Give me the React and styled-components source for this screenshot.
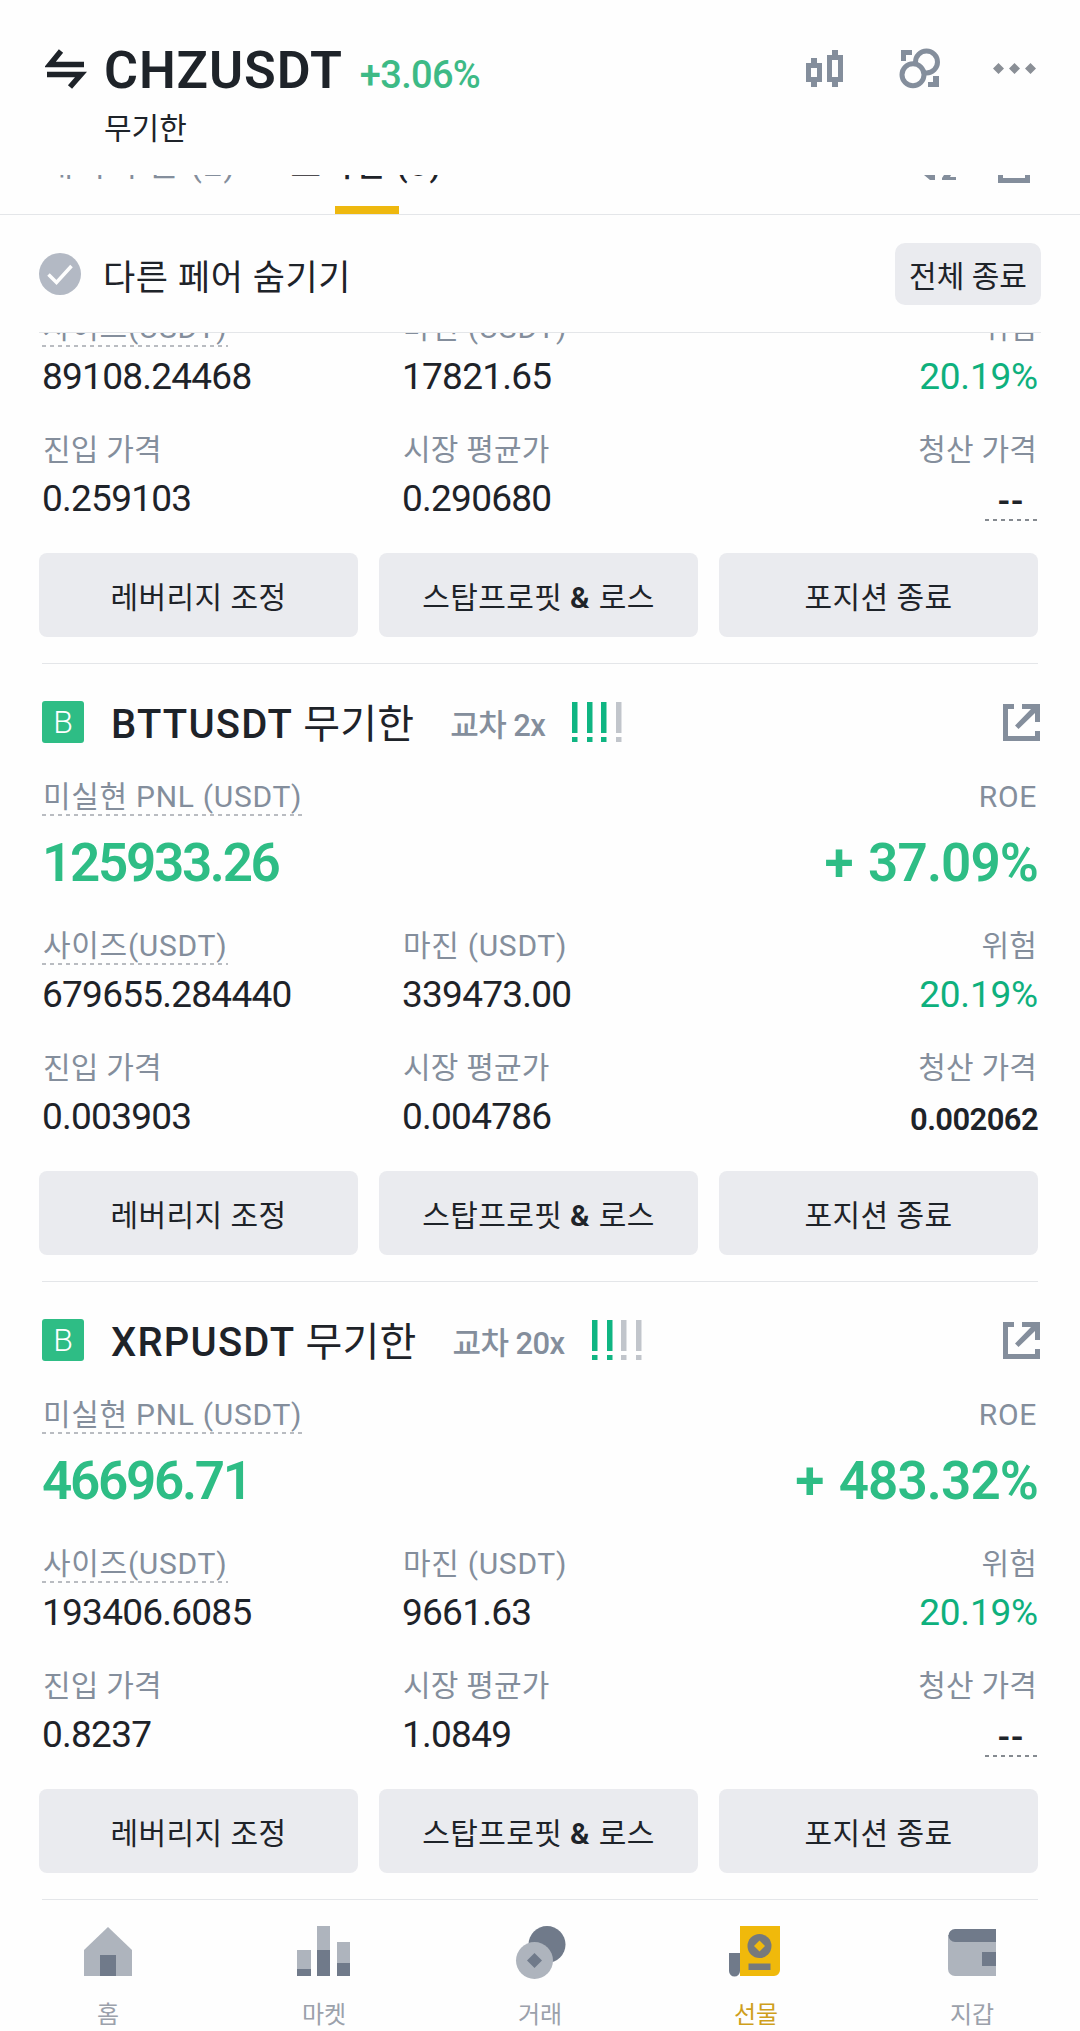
import styled, { createGlobalStyle, css } from 'styled-components';

const GlobalStyle = createGlobalStyle`
  * {
    box-sizing: border-box;
  }

  body {
    margin: 0;
    background: #fefefe;
  }
`;

const Screen = styled.div`
  display: flex;
  flex-direction: column;
  width: 1080px;
  height: 2031px;
  overflow: hidden;
  background: #fefefe;
  color: #1e2329;
  font-family: Roboto, 'Noto Sans CJK KR', sans-serif;
  white-space: nowrap;
`;

const Header = styled.header`
  display: flex;
  justify-content: space-between;
  height: 175px;
  padding: 38px 43px 0 45px;
`;

const HeaderLeft = styled.div`
  display: grid;
  grid-template-columns: 59px auto;
  align-content: start;
`;

const SwapIcon = styled.svg`
  width: 42px;
  height: 42px;
  margin-top: 10px;
`;

const TitleLine = styled.div`
  display: flex;
  align-items: baseline;
  height: 66px;
  padding-top: 1px;
  line-height: 64px;
`;

const Symbol = styled.h1`
  margin: 0;
  font-size: 52px;
  font-weight: 600;
  letter-spacing: 0.9px;
`;

const Change = styled.span`
  margin-left: 17px;
  font-size: 38px;
  font-weight: 500;
  letter-spacing: -0.7px;
  color: #3dba86;
`;

const ContractType = styled.div`
  grid-column: 2;
  height: 50px;
  line-height: 50px;
  font-size: 30px;
`;

const HeaderIcons = styled.div`
  display: flex;
  gap: 54px;
  margin-top: 8px;
  height: 46px;
`;

const HeaderIcon = styled.svg`
  width: 42px;
  height: 46px;
  overflow: visible;
`;

const Tabs = styled.div`
  display: flex;
  justify-content: space-between;
  height: 40px;
  padding: 0 48px 0 43px;
  border-bottom: 1px solid #e4e6e9;
  overflow: hidden;
`;

const TabList = styled.div`
  display: flex;
  gap: 54px;
`;

const Tab = styled.div`
  display: flex;
  flex-direction: column;
  justify-content: space-between;
  align-items: center;
  font-size: 33px;
  letter-spacing: 1.6px;
  color: ${(props) => (props.$active ? '#1e2329' : '#848e9c')};
  font-weight: ${(props) => (props.$active ? 500 : 400)};

  &::after {
    content: '';
    width: 64px;
    height: 8px;
    background: ${(props) => (props.$active ? '#eeb80f' : 'transparent')};
  }
`;

const TabLabel = styled.span`
  height: 12px;
  margin-top: -32px;
  line-height: 44px;
`;

const TabIcons = styled.svg`
  width: 108px;
  height: 10px;
`;

const FilterBar = styled.div`
  display: flex;
  align-items: center;
  height: 118px;
  margin: 0 39px;
  padding-top: 1px;
  border-bottom: 1px solid #e4e6e9;
`;

const Check = styled.svg`
  width: 42px;
  height: 42px;
`;

const FilterLabel = styled.span`
  flex: 1;
  margin-left: 22px;
  padding-top: 9px;
  font-size: 35px;
  line-height: 50px;
  letter-spacing: 0.6px;
`;

const Button = styled.button`
  border: 0;
  background: #eaebef;
  color: #1e2329;
  font-family: inherit;
  font-size: 30px;
  line-height: 30px;
`;

const CloseAll = styled(Button)`
  width: 146px;
  height: 62px;
  padding: 6px 0 0;
  border-radius: 10px;
`;

const Positions = styled.main`
  height: 1567px;
  overflow: hidden;
`;

const Card = styled.section`
  display: flex;
  flex-direction: column;
  justify-content: flex-end;
  height: ${(props) => (props.$scrolled ? 331 : 618)}px;
  margin: 0 42px;
  padding-bottom: 26px;
  border-bottom: 1px solid #e4e6e9;
`;

const CardHead = styled.div`
  display: flex;
  align-items: center;
  flex-shrink: 0;
  height: 42px;
  margin-bottom: 33px;
`;

const Side = styled.div`
  width: 42px;
  height: 42px;
  border-radius: 3px;
  background: #2ebd85;
  color: #fff;
  font-size: 32px;
  font-weight: 300;
  line-height: 43px;
  text-align: center;
`;

const Pair = styled.h2`
  margin: 5px 0 0 27px;
  font-size: 40px;
  font-weight: 500;
  line-height: 50px;
  letter-spacing: 1.2px;

  span {
    font-weight: 400;
    letter-spacing: 0.2px;
  }
`;

const Leverage = styled.span`
  margin: 8px 27px 0 36px;
  font-size: 31px;
  font-weight: 500;
  line-height: 40px;
  letter-spacing: -0.6px;
  color: #848e9c;
`;

const Signal = styled.svg`
  width: 50px;
  height: 40px;
`;

const OpenIcon = styled.svg`
  width: 37px;
  height: 37px;
  margin: 1px -2px 0 auto;
`;

const Row = styled.div`
  display: grid;
  grid-template-columns: 360px 1fr auto;
  flex-shrink: 0;
  height: ${(props) => props.$height}px;
`;

const Cell = styled.div`
  display: flex;
  flex-direction: column;
  align-items: flex-start;

  &:last-child {
    grid-column: 3;
    align-items: flex-end;
  }
`;

const dashed = (color) => css`
  background: repeating-linear-gradient(90deg, ${color} 0 4px, transparent 4px 8px) 0 100% / 100% 2px no-repeat;
`;

const Label = styled.div`
  height: 40px;
  padding: 0 1px;
  font-size: 30px;
  line-height: 42px;
  letter-spacing: ${(props) => (props.$wide ? '0.7px' : '0.2px')};
  color: #848e9c;
  ${(props) => props.$hint && dashed('#b9bcc1')}
`;

const Value = styled.div`
  height: 40px;
  margin-top: 10px;
  font-size: 37px;
  line-height: 40px;
  letter-spacing: ${(props) => (props.$green ? '-0.2px' : '-0.75px')};
  color: ${(props) => (props.$green ? '#0eb07d' : '#1e2329')};
`;

const LiquidationPrice = styled(Value)`
  margin-top: 13px;
  font-size: 31px;
  font-weight: 600;
  letter-spacing: -0.6px;
`;

const NoPrice = styled.div`
  width: 52px;
  height: 43px;
  margin: 9px 1px 0 0;
  font-size: 36px;
  font-weight: 500;
  line-height: 48px;
  letter-spacing: 1px;
  text-align: center;
  ${dashed('#858a90')}
`;

const Profit = styled.div`
  height: 60px;
  margin-top: 17px;
  font-size: 53px;
  font-weight: 600;
  line-height: 60px;
  letter-spacing: ${(props) => (props.$rate ? '-0.9px' : '-2.3px')};
  word-spacing: 3px;
  color: #2ebd85;
`;

const Actions = styled.div`
  display: grid;
  grid-template-columns: repeat(3, 1fr);
  flex-shrink: 0;
  gap: 21px;
  margin-left: -3px;
`;

const Action = styled(Button)`
  height: 84px;
  padding: 6px 0 0;
  border-radius: 8px;
  letter-spacing: 0.4px;

  b {
    font-weight: 600;
    letter-spacing: 1.5px;
  }
`;

const Nav = styled.nav`
  display: grid;
  grid-template-columns: repeat(5, 1fr);
  flex: 1;
  padding-top: 26px;
`;

const NavItem = styled.div`
  display: flex;
  flex-direction: column;
  align-items: center;
  font-size: 24px;
  line-height: 30px;
  color: ${(props) => (props.$active ? '#cf9f1c' : '#9ba1ab')};

  svg {
    width: 54px;
    height: 54px;
    margin-bottom: 20px;
  }
`;

const positions = [
  {
    scrolled: true,
    size: '89108.24468',
    margin: '17821.65',
    entry: '0.259103',
    mark: '0.290680',
  },
  {
    pair: 'BTTUSDT',
    leverage: '2x',
    signal: 3,
    pnl: '125933.26',
    roe: '+ 37.09%',
    size: '679655.284440',
    margin: '339473.00',
    entry: '0.003903',
    mark: '0.004786',
    liquidation: '0.002062',
  },
  {
    pair: 'XRPUSDT',
    leverage: '20x',
    signal: 2,
    pnl: '46696.71',
    roe: '+ 483.32%',
    size: '193406.6085',
    margin: '9661.63',
    entry: '0.8237',
    mark: '1.0849',
  },
];

const navItems = [
  {
    label: '홈',
    icon: (
      <>
        <path d="M3 50V24L27 1l24 23v26z" fill="#aeb4bd" />
        <path d="M19 29h16v21H19z" fill="#707a8a" />
      </>
    ),
  },
  {
    label: '마켓',
    icon: (
      <>
        <path d="M0 24h14v26H0zM20 0h13v50H20zM40 16h13v34H40z" fill="#aeb4bd" />
        <path d="M0 43h14v7H0zM20 24h13v26H20zM40 37h13v13H40z" fill="#707a8a" />
      </>
    ),
  },
  {
    label: '거래',
    icon: (
      <>
        <circle cx="34" cy="18.5" r="18.5" fill="#707a8a" />
        <circle cx="21.5" cy="34.5" r="18.5" fill="#aeb4bd" />
        <path d="M21.5 27l7.5 7.5-7.5 7.5-7.5-7.5z" fill="#707a8a" />
      </>
    ),
  },
  {
    label: '선물',
    active: true,
    icon: (
      <>
        <path d="M5 50h40a6 6 0 0 0 6-6V0H11v50z" fill="#f0b90b" />
        <path d="M0 27h11v18a5.5 5.5 0 0 1-11 0z" fill="#707a8a" />
        <circle cx="30.5" cy="20" r="12" fill="#76797c" />
        <path d="M30.5 14.5l5.5 5.5-5.5 5.5-5.5-5.5z" fill="#f0b90b" />
        <path d="M19.5 37.5h22V44h-22z" fill="#76797c" />
      </>
    ),
  },
  {
    label: '지갑',
    icon: (
      <>
        <path d="M3 9h48v41H10a7 7 0 0 1-7-7z" fill="#aeb4bd" />
        <path d="M51 3v13H10a6.5 6.5 0 0 1 0-13z" fill="#707a8a" />
        <path d="M37 26h14v14H37z" fill="#707a8a" />
      </>
    ),
  },
];

const SignalBars = ({ level }) => (
  <Signal viewBox="0 0 50 40">
    {[0, 15, 29, 44].map((x, index) => (
      <path
        key={x}
        d={`M${x} 0h5.5v31h-5.5zM${x} 35h5.5v5h-5.5z`}
        fill={index < level ? '#0fb582' : '#c1c5cb'}
      />
    ))}
  </Signal>
);

const PositionCard = ({ position }) => (
  <Card $scrolled={position.scrolled}>
    {!position.scrolled && (
      <>
        <CardHead>
          <Side>B</Side>
          <Pair>
            {position.pair} <span>무기한</span>
          </Pair>
          <Leverage>교차 {position.leverage}</Leverage>
          <SignalBars level={position.signal} />
          <OpenIcon viewBox="0 0 37 37" fill="#848e9c">
            <path d="M0 0h11v5H5v27h27v-5h5v10H0z" />
            <path d="M19 0h18v18h-5V9L15.5 25 12 21.5 28 5h-9z" />
          </OpenIcon>
        </CardHead>
        <Row $height={149}>
          <Cell>
            <Label $hint $wide>미실현 PNL (USDT)</Label>
            <Profit>{position.pnl}</Profit>
          </Cell>
          <Cell>
            <Label $wide>ROE</Label>
            <Profit $rate>{position.roe}</Profit>
          </Cell>
        </Row>
      </>
    )}
    <Row $height={122}>
      <Cell>
        <Label $hint $wide>사이즈(USDT)</Label>
        <Value>{position.size}</Value>
      </Cell>
      <Cell>
        <Label $wide>마진 (USDT)</Label>
        <Value>{position.margin}</Value>
      </Cell>
      <Cell>
        <Label>위험</Label>
        <Value $green>20.19%</Value>
      </Cell>
    </Row>
    <Row $height={124}>
      <Cell>
        <Label>진입 가격</Label>
        <Value>{position.entry}</Value>
      </Cell>
      <Cell>
        <Label>시장 평균가</Label>
        <Value>{position.mark}</Value>
      </Cell>
      <Cell>
        <Label>청산 가격</Label>
        {position.liquidation ? (
          <LiquidationPrice>{position.liquidation}</LiquidationPrice>
        ) : (
          <NoPrice>--</NoPrice>
        )}
      </Cell>
    </Row>
    <Actions>
      <Action>레버리지 조정</Action>
      <Action>
        스탑프로핏 <b>&amp;</b> 로스
      </Action>
      <Action>포지션 종료</Action>
    </Actions>
  </Card>
);

const App = () => (
  <Screen>
    <GlobalStyle />
    <Header>
      <HeaderLeft>
        <SwapIcon viewBox="0 0 42 42" fill="none" stroke="#1e2329" strokeWidth="5.5">
          <path d="M39 16.5H5L16 3M2 26.5h34L25 39" />
        </SwapIcon>
        <TitleLine>
          <Symbol>CHZUSDT</Symbol>
          <Change>+3.06%</Change>
        </TitleLine>
        <ContractType>무기한</ContractType>
      </HeaderLeft>
      <HeaderIcons>
        <HeaderIcon viewBox="0 0 42 46" fill="#848e9c" fillRule="evenodd">
          <path d="M3 17h5v-5h6v5h5v19h-5v5H8v-5H3zM8 22v9h6v-9z" />
          <path d="M24 9h5V4h6v5h5v27h-5v5h-6v-5h-5zM29 14v17h6V14z" />
        </HeaderIcon>
        <HeaderIcon viewBox="0 0 42 46" fill="none" stroke="#848e9c" strokeWidth="5">
          <circle cx="27.5" cy="16" r="11" />
          <circle cx="14" cy="28.7" r="11" fill="#fefefe" />
          <path d="M2 4h11v5H7v6H2zM40 41H29v-5h5v-6h6z" fill="#848e9c" stroke="none" />
        </HeaderIcon>
        <HeaderIcon viewBox="0 0 42 46" fill="#8a8f96">
          <path d="M3.5 17l5.5 5.5L3.500 28-2 22.500zM19.500 17l5.500 5.500-5.500 5.500-5.500-5.500zM35.500 17l5.500 5.500-5.500 5.500-5.500-5.500z" />
        </HeaderIcon>
      </HeaderIcons>
    </Header>
    <Tabs>
      <TabList>
        <Tab>
          <TabLabel>대기 주문 (2)</TabLabel>
        </Tab>
        <Tab $active>
          <TabLabel>포지션 (3)</TabLabel>
        </Tab>
      </TabList>
      <TabIcons viewBox="0 0 108 10" fill="#848e9c">
        <path d="M0 0h11v5H6zM18 3l2-3h7l-1 2h6v3H18zM74 0h5v3h22V0h5v8H74z" />
      </TabIcons>
    </Tabs>
    <FilterBar>
      <Check viewBox="0 0 42 42">
        <circle cx="21" cy="21" r="21" fill="#b3b9c4" />
        <path d="M9.5 21.5l8 8L32.5 13" fill="none" stroke="#fefefe" strokeWidth="3.5" />
      </Check>
      <FilterLabel>다른 페어 숨기기</FilterLabel>
      <CloseAll>전체 종료</CloseAll>
    </FilterBar>
    <Positions>
      {positions.map((position) => (
        <PositionCard key={position.size} position={position} />
      ))}
    </Positions>
    <Nav>
      {navItems.map((item) => (
        <NavItem key={item.label} $active={item.active}>
          <svg viewBox="0 0 54 54">{item.icon}</svg>
          {item.label}
        </NavItem>
      ))}
    </Nav>
  </Screen>
);

export default App;
